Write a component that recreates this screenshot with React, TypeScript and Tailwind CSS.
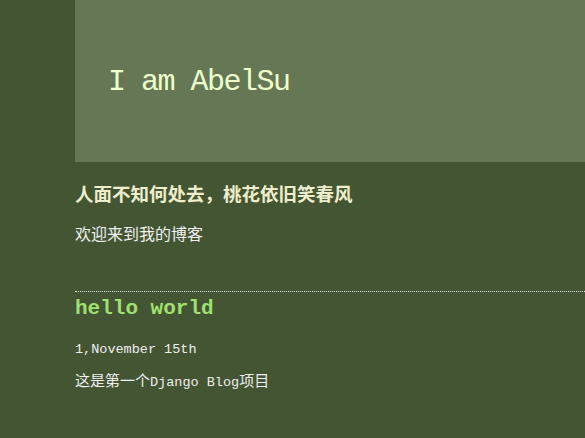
function App() {
  return (
    <main className="min-h-[438px] bg-[#445533] pl-[75px] text-white">
      <header className="flex h-[162px] items-center bg-[#667755] pl-[33px]">
        <h1 className="mt-[2px] font-['Liberation_Mono','Noto_Sans_CJK_SC',monospace] text-[30px] tracking-[-1.5px] text-[#eeffcc]">
          I am AbelSu
        </h1>
      </header>

      <section className="font-['Liberation_Sans','Noto_Sans_CJK_SC',sans-serif]">
        <h3 className="mt-[21px] text-[18.5px] leading-[24px] font-bold text-[#eeeecc]">
          人面不知何处去，桃花依旧笑春风
        </h3>
        <p className="mt-[17px] text-[16px] leading-[22px] text-[#eeeeee]">欢迎来到我的博客</p>
      </section>

      <article className="mt-[45px] border-t border-dotted border-[#dddddd]">
        <h2 className="mt-[3px] font-['Liberation_Mono',monospace] text-[21px] leading-[28px] font-bold text-[#a0e070]">
          hello world
        </h2>
        <p className="mt-[17px] font-['Liberation_Mono',monospace] text-[13.5px] leading-[20px] text-[#eeeeee]">
          1,November 15th
        </p>
        <p className="mt-[12px] font-['Liberation_Mono','Noto_Sans_CJK_SC',monospace] text-[15px] leading-[22px] text-[#eeeeee]">
          这是第一个<span className="text-[13.5px]">Django Blog</span>项目
        </p>
      </article>
    </main>
  );
}

export default App;
